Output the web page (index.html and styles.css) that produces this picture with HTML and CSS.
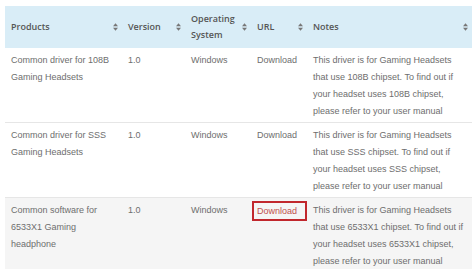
FILE: index.html
```html
<!DOCTYPE html>
<html lang="en">
<head>
    <meta charset="UTF-8">
    <title>Drivers</title>
    <link rel="stylesheet" href="styles.css">
</head>
<body>
    <table class="drivers">
        <colgroup>
            <col class="c-product">
            <col class="c-version">
            <col class="c-os">
            <col class="c-url">
            <col class="c-notes">
        </colgroup>
        <thead>
            <tr>
                <th><span class="th-label">Products</span><svg class="sort" viewBox="0 0 6 9"><path d="M3 0L6 3.5H0Z M3 9L0 5.5H6Z"/></svg></th>
                <th><span class="th-label">Version</span><svg class="sort" viewBox="0 0 6 9"><path d="M3 0L6 3.5H0Z M3 9L0 5.5H6Z"/></svg></th>
                <th><span class="th-label">Operating System</span><svg class="sort" viewBox="0 0 6 9"><path d="M3 0L6 3.5H0Z M3 9L0 5.5H6Z"/></svg></th>
                <th><span class="th-label">URL</span><svg class="sort" viewBox="0 0 6 9"><path d="M3 0L6 3.5H0Z M3 9L0 5.5H6Z"/></svg></th>
                <th><span class="th-label">Notes</span><svg class="sort" viewBox="0 0 6 9"><path d="M3 0L6 3.5H0Z M3 9L0 5.5H6Z"/></svg></th>
            </tr>
        </thead>
        <tbody>
            <tr>
                <td>Common driver for 108B Gaming Headsets</td>
                <td>1.0</td>
                <td>Windows</td>
                <td><a class="dl" href="#">Download</a></td>
                <td>This driver is for Gaming Headsets that use 108B chipset. To find out if your headset uses 108B chipset, please refer to your user manual</td>
            </tr>
            <tr>
                <td>Common driver for SSS Gaming Headsets</td>
                <td>1.0</td>
                <td>Windows</td>
                <td><a class="dl" href="#">Download</a></td>
                <td>This driver is for Gaming Headsets that use SSS chipset. To find out if your headset uses SSS chipset, please refer to your user manual</td>
            </tr>
            <tr class="alt">
                <td>Common software for 6533X1 Gaming headphone</td>
                <td>1.0</td>
                <td>Windows</td>
                <td><a class="dl marked" href="#">Download</a></td>
                <td>This driver is for Gaming Headsets that use 6533X1 chipset. To find out if your headset uses 6533X1 chipset, please refer to your user manual</td>
            </tr>
        </tbody>
    </table>
</body>
</html>
```

FILE: styles.css
```css
body {
    margin: 0;
    padding: 6px 2px 0 5px;
    background: #ffffff;
    font-family: "Liberation Sans", Arial, sans-serif;
    color: #6e6e6e;
}
.drivers {
    width: 467px;
    border-collapse: collapse;
    table-layout: fixed;
    font-size: 9px;
}
.c-product { width: 117px; }
.c-version { width: 63px; }
.c-os { width: 66px; }
.c-url { width: 56px; }
.c-notes { width: 165px; }
.drivers thead tr {
    background: #d9edf7;
}
.drivers th {
    position: relative;
    height: 42px;
    padding: 0 14px 0 6px;
    text-align: left;
    font-family: "Open Sans", sans-serif;
    font-weight: 600;
    font-size: 9px;
    line-height: 16px;
    color: #555;
}
.sort {
    position: absolute;
    right: 4px;
    top: 17px;
    width: 5px;
    height: 8px;
    fill: #777;
}
.drivers td {
    vertical-align: top;
    padding: 4px 6px 2px 6px;
    line-height: 17px;
    border-top: 1px solid #e6e6e6;
}
.drivers tbody tr:first-child td {
    border-top: none;
}
.drivers tr.alt {
    background: #f5f5f5;
}
.dl {
    color: #6e6e6e;
    text-decoration: none;
}
.dl.marked {
    display: inline-block;
    vertical-align: top;
    margin: -1px 0 0 -5px;
    padding: 3px 8px 2px 3px;
    line-height: 11px;
    color: #c0504d;
    border: 2px solid #c1272d;
}
```
